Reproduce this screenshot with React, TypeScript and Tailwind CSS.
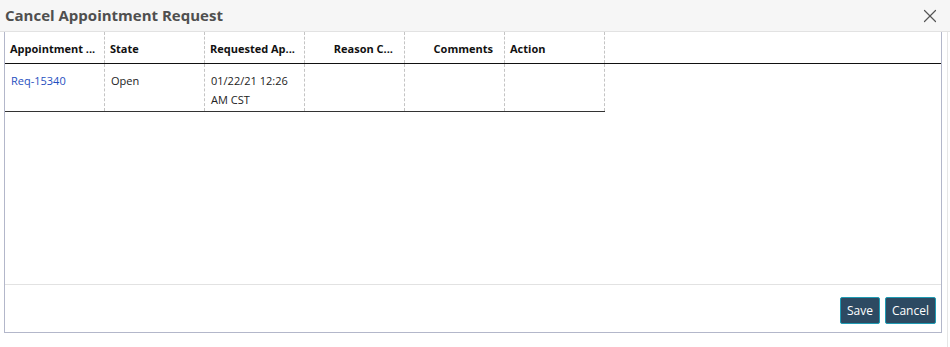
import { X } from 'lucide-react'

const headers = [
  { label: 'Appointment ...', right: false },
  { label: 'State', right: false },
  { label: 'Requested Ap...', right: false },
  { label: 'Reason C...', right: true },
  { label: 'Comments', right: true },
  { label: 'Action', right: false },
]

export default function App() {
  return (
    <div className="w-[950px] h-[347px] bg-white overflow-hidden text-[#222]" style={{ fontFamily: '"Open Sans", "Liberation Sans", sans-serif' }}>
      <div className="h-[32px] bg-[#f6f6f6] border-b border-[#e2e2e2] flex items-center justify-between pl-[5px] pr-[9px]">
        <h1 className="text-[15px] font-bold text-[#4f4f4f] leading-none">Cancel Appointment Request</h1>
        <X size={22} strokeWidth={1.3} className="text-[#555]" />
      </div>

      <div className="w-[948px] h-[315px] border-r border-[#e6e6e6]">
        <div className="ml-[4px] w-[938px] h-[301px] border-l border-r border-b border-[#b3b7ca] flex flex-col">
          <div className="flex-1">
            <div className="flex border-b border-[#111] h-[32px]">
              {headers.map(h => (
                <div key={h.label} className={`w-[100px] h-full border-r border-dashed border-[#c4c4c4] flex items-center px-[5px] pt-[3px] text-[11px] font-bold text-[#111] ${h.right ? 'justify-end pr-[11px]' : ''}`}>
                  {h.label}
                </div>
              ))}
            </div>
            <div className="flex w-[600px] h-[48px] border-b border-[#333]">
              <div className="w-[100px] border-r border-dashed border-[#c4c4c4] px-[6px] pt-[7px] text-[11px] leading-[19px] text-[#1f4fc0]">Req-15340</div>
              <div className="w-[100px] border-r border-dashed border-[#c4c4c4] px-[6px] pt-[7px] text-[11px] leading-[19px]">Open</div>
              <div className="w-[100px] border-r border-dashed border-[#c4c4c4] px-[6px] pt-[7px] text-[11px] leading-[19px]">01/22/21 12:26<br />AM CST</div>
              <div className="w-[100px] border-r border-dashed border-[#c4c4c4]" />
              <div className="w-[100px] border-r border-dashed border-[#c4c4c4]" />
              <div className="w-[100px] border-r border-dashed border-[#c4c4c4]" />
            </div>
          </div>
          <div className="h-[48px] border-t border-[#e2e2e2] flex justify-end items-start gap-[5px] pt-[12px] pr-[5px]">
            <button className="h-[27px] px-[6px] bg-[#2d4a62] border border-[#1f9bb3] rounded-[2px] text-white text-[12px]">Save</button>
            <button className="h-[27px] px-[6px] bg-[#2d4a62] border border-[#1f9bb3] rounded-[2px] text-white text-[12px]">Cancel</button>
          </div>
        </div>
      </div>
    </div>
  )
}
